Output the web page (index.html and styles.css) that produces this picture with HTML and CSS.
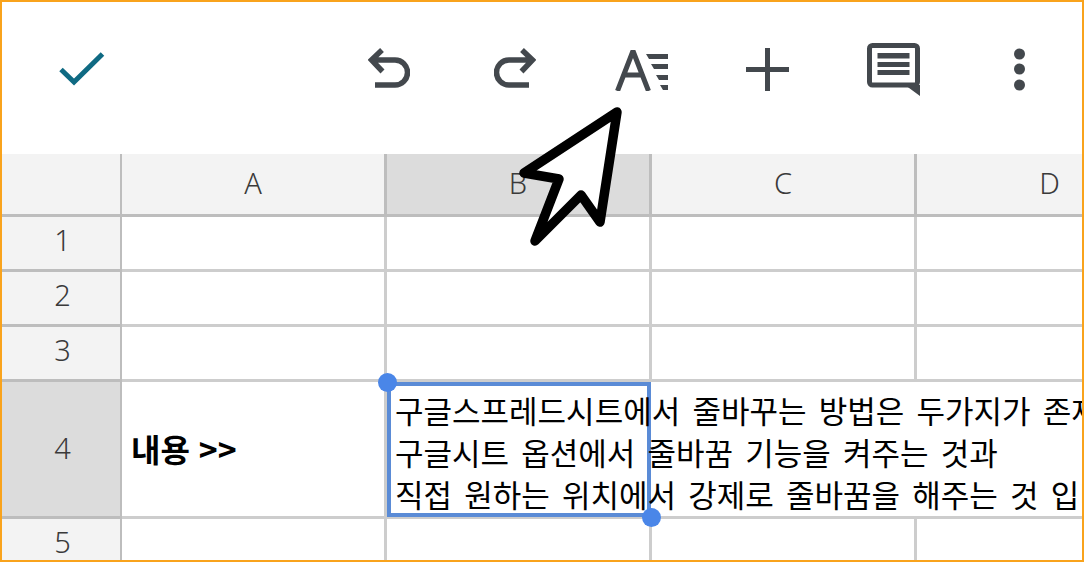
FILE: index.html
```html
<!DOCTYPE html>
<html lang="ko">
<head>
<meta charset="utf-8">
<title>구글 시트</title>
<link rel="stylesheet" href="styles.css">
</head>
<body>
<div class="frame">
  <header class="toolbar">
    <div class="check-slot">
      <svg class="icon-check" width="46" height="36" viewBox="0 0 46 36"><path d="M2 18.5 L15 31 L43.5 3"/></svg>
    </div>
    <div class="actions">
      <div class="slot"><svg class="icon icon-arrow" width="42" height="42" viewBox="0 0 42 42"><path d="M14 2 L3.5 12 L14.5 23.5 M4 12 H27 A12.5 12.5 0 0 1 27 37 H7"/></svg></div>
      <div class="slot"><svg class="icon icon-arrow" width="42" height="42" viewBox="0 0 42 42"><path d="M28 2 L38.5 12 L27.5 23.5 M38 12 H15 A12.5 12.5 0 0 0 15 37 H35"/></svg></div>
      <div class="slot"><svg class="icon icon-wrap" width="53" height="43" viewBox="0 0 53 43"><path d="M2.5 43 L18 3 L33.5 43 M8 27 H28"/><path class="solid" d="M31 6 H53 V11 H34 Z M36 16 H53 V21 H39 Z M41 27 H53 V32 H44 Z M45 37 H53 V42 H48 Z"/></svg></div>
      <div class="slot"><svg class="icon" width="43" height="43" viewBox="0 0 43 43"><path d="M21.5 0 V43 M0 21.5 H43"/></svg></div>
      <div class="slot"><svg class="icon" width="53" height="53" viewBox="0 0 53 53"><rect x="2.5" y="2.5" width="48" height="39.5" rx="3"/><path class="solid" d="M38 42 H53 V53 Z M10.5 10 H42.5 V15.5 H10.5 Z M10.5 19 H42.5 V24 H10.5 Z M10.5 27 H42.5 V32 H10.5 Z"/></svg></div>
      <div class="slot"><svg class="icon" width="11" height="43" viewBox="0 0 11 43"><circle class="solid" cx="5.5" cy="6" r="5.5"/><circle class="solid" cx="5.5" cy="21" r="5.5"/><circle class="solid" cx="5.5" cy="37" r="5.5"/></svg></div>
    </div>
  </header>

  <main class="sheet">
    <div class="head corner"></div>
    <div class="head col">A</div>
    <div class="head col selected">B</div>
    <div class="head col">C</div>
    <div class="head col last">D</div>

    <div class="head row-num">1</div><div class="cell"></div><div class="cell"></div><div class="cell"></div><div class="cell last"></div>
    <div class="head row-num">2</div><div class="cell"></div><div class="cell"></div><div class="cell"></div><div class="cell last"></div>
    <div class="head row-num">3</div><div class="cell"></div><div class="cell"></div><div class="cell"></div><div class="cell last"></div>

    <div class="head row-num selected">4</div>
    <div class="cell label">내용 &gt;&gt;</div>
    <div class="cell active">
      <div class="selection">
        <span class="handle handle-start"></span>
        <span class="handle handle-end"></span>
      </div>
      <div class="content">
        <div>구글스프레드시트에서 줄바꾸는 방법은 두가지가 존재합니다</div>
        <div>구글시트 옵션에서 줄바꿈 기능을 켜주는 것과</div>
        <div>직접 원하는 위치에서 강제로 줄바꿈을 해주는 것 입니다</div>
      </div>
    </div>

    <div class="head row-num">5</div><div class="cell"></div><div class="cell"></div><div class="cell"></div><div class="cell last"></div>
  </main>

  <svg class="pointer" width="110" height="150" viewBox="0 0 110 150"><path d="M102 12 L9 73 L44 79 L20 141 L66 95 L85 122 Z"/></svg>
</div>
</body>
</html>
```
FILE: styles.css
```css
* { box-sizing: border-box; }
html, body { margin: 0; padding: 0; background: #fff; }
.frame {
  position: relative;
  width: 1084px;
  height: 562px;
  border: 2px solid #f9a31c;
  overflow: hidden;
  font-family: "Noto Sans", "Noto Sans CJK KR", sans-serif;
}
.toolbar {
  display: flex;
  align-items: center;
  height: 152px;
  padding-bottom: 18px;
  background: #fff;
}
.check-slot { width: 160px; display: flex; justify-content: center; }
.actions { margin-left: auto; display: flex; }
.slot { width: 126px; display: flex; justify-content: center; align-items: center; }
svg { display: block; }
.icon-check path { fill: none; stroke: #0f6a83; stroke-width: 5; }
.icon path, .icon rect { fill: none; stroke: #43484d; stroke-width: 5; }
.icon-arrow path { stroke-width: 5.5; }
.icon-wrap path { stroke-linejoin: bevel; }
.icon .solid { fill: #43484d; stroke: none; }

.sheet {
  display: grid;
  grid-template-columns: 120px 265px 265px 265px 265px;
  grid-template-rows: 63px 55px 55px 55px 137px 55px;
}
.head {
  display: flex;
  align-items: center;
  justify-content: center;
  background: #f3f3f3;
  border-right: 3px solid #bdbdbd;
  border-bottom: 3px solid #bdbdbd;
  color: #3a3a3a;
  font-size: 29px;
  font-weight: 300;
}
.corner, .row-num { border-right-width: 2px; }
.row-num { padding: 0 0 8px 3px; }
.row-num.selected { padding-bottom: 4px; }
.col { padding-bottom: 4px; }
.head.last { border-right: 0; }
.head.selected { background: #dcdcdc; }
.cell {
  border-right: 3px solid #cdcdcd;
  border-bottom: 3px solid #cdcdcd;
  background: #fff;
}
.cell.last { border-right: 0; }
.label {
  display: flex;
  align-items: center;
  padding: 0 0 3px 9px;
  font-family: "Noto Sans CJK KR", sans-serif;
  font-size: 32px;
  font-weight: 700;
  color: #000;
}
.active {
  position: relative;
  grid-column: span 3;
  border-right: 0;
}
.selection {
  position: absolute;
  left: 0;
  top: 0;
  width: 264px;
  height: 135px;
  border: 4px solid #5a8bd6;
}
.handle {
  position: absolute;
  width: 19px;
  height: 19px;
  border-radius: 50%;
  background: #4a86e8;
}
.handle-start { left: -13px; top: -13px; }
.handle-end { right: -14px; bottom: -14px; }
.content {
  position: relative;
  padding: 7px 0 0 8px;
  font-family: "Noto Sans CJK KR", sans-serif;
  font-size: 31px;
  word-spacing: 3.5px;
  line-height: 42px;
  color: #000;
  white-space: nowrap;
}
.pointer {
  position: absolute;
  left: 513px;
  top: 98px;
}
.pointer path {
  fill: #fff;
  stroke: #000;
  stroke-width: 9.5;
  stroke-linejoin: round;
}
```
